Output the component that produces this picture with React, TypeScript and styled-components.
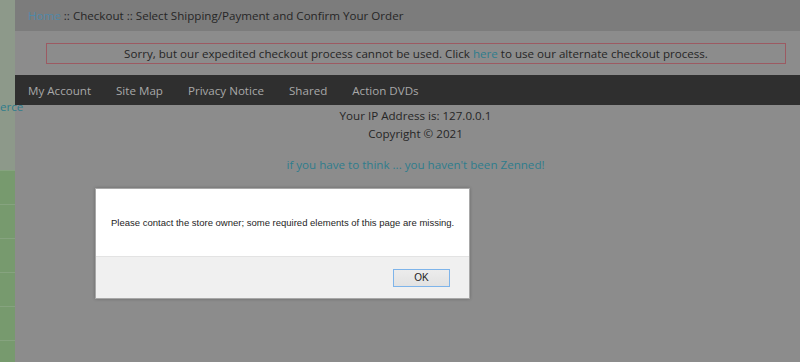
import React from "react";
import styled, { createGlobalStyle } from "styled-components";

const Global = createGlobalStyle`
  html, body { margin: 0; padding: 0; background: #8c8c8c; }
  body { font-family: "Open Sans", "Noto Sans", sans-serif; }
  #root { width: 800px; height: 362px; overflow: hidden; }
`;

const Page = styled.div`
  display: flex;
  width: 800px;
  height: 362px;
  position: relative;
`;

const SideStrip = styled.aside`
  width: 15px;
  flex: none;
  display: flex;
  flex-direction: column;
  background: #8d998a;
`;

const SideTop = styled.div`
  height: 170px;
  flex: none;
  position: relative;
`;

const SideLabel = styled.span<{ $top: number }>`
  position: absolute;
  left: 0;
  top: ${(p) => p.$top}px;
  z-index: 2;
  font-size: 11.6px;
  line-height: 14px;
  color: #2f7d8c;
  white-space: nowrap;
`;

const SideCell = styled.div`
  height: 33px;
  flex: none;
  background: #779a6e;
  border-top: 1px solid #86a37f;
`;

const Main = styled.main`
  flex: 1;
  display: flex;
  flex-direction: column;
  background: #8c8c8c;
  color: #262626;
  font-size: 11.6px;
`;

const Breadcrumb = styled.div`
  height: 31px;
  display: flex;
  align-items: center;
  padding-left: 13px;
  background: #7c7c7c;
  color: #262626;
`;

const Crumb = styled.span`
  color: #5088a8;
`;

const AlertWrap = styled.div`
  height: 44px;
  display: flex;
  align-items: center;
  padding: 0 14px 0 31px;
`;

const AlertBox = styled.div`
  flex: 1;
  height: 19px;
  display: flex;
  align-items: center;
  justify-content: center;
  border: 1px solid #9c5a62;
`;

const Link = styled.span`
  color: #2f7d8c;
  white-space: pre;
`;

const NavBar = styled.nav`
  height: 30px;
  display: flex;
  align-items: center;
  gap: 25px;
  padding-left: 13px;
  background: #2f2f2f;
`;

const NavItem = styled.span`
  color: #a8a8a8;
`;

const Footer = styled.div`
  display: flex;
  flex-direction: column;
  align-items: center;
  padding: 2px 0 0 16px;
  line-height: 18px;
`;

const Tagline = styled.div`
  margin-top: 13px;
  color: #2f7d8c;
`;

const Dialog = styled.div`
  position: absolute;
  left: 95px;
  top: 188px;
  width: 373px;
  height: 109px;
  display: flex;
  flex-direction: column;
  background: #ffffff;
  border: 1px solid #a8a8a8;
  box-shadow: 0 0 3px rgba(0, 0, 0, 0.25);
  font-family: "Liberation Sans", Arial, sans-serif;
  color: #1e1e1e;
`;

const DialogBody = styled.div`
  height: 67px;
  display: flex;
  align-items: center;
  padding-left: 15px;
  font-size: 9.5px;
  white-space: nowrap;
`;

const DialogFooter = styled.div`
  flex: 1;
  display: flex;
  align-items: center;
  justify-content: flex-end;
  padding-right: 19px;
  background: #f0f0f0;
  border-top: 1px solid #e3e3e3;
`;

const OkButton = styled.button`
  width: 57px;
  height: 18px;
  padding: 0;
  border: 1px solid #7eb4ea;
  background: linear-gradient(#ececec, #e2e2e2);
  font-family: "Liberation Sans", Arial, sans-serif;
  font-size: 10px;
  color: #222;
`;

export default function App() {
  return (
    <>
      <Global />
      <Page>
        <SideStrip>
          <SideTop>
            <SideLabel $top={100}>erce</SideLabel>
          </SideTop>
          {[0, 1, 2, 3, 4, 5].map((i) => (
            <SideCell key={i} />
          ))}
        </SideStrip>
        <Main>
          <Breadcrumb>
            <Crumb>Home</Crumb>&nbsp;:: Checkout :: Select Shipping/Payment and Confirm Your Order
          </Breadcrumb>
          <AlertWrap>
            <AlertBox>
              Sorry, but our expedited checkout process cannot be used. Click&nbsp;<Link>here</Link>&nbsp;to use our alternate checkout process.
            </AlertBox>
          </AlertWrap>
          <NavBar>
            <NavItem>My Account</NavItem>
            <NavItem>Site Map</NavItem>
            <NavItem>Privacy Notice</NavItem>
            <NavItem>Shared</NavItem>
            <NavItem>Action DVDs</NavItem>
          </NavBar>
          <Footer>
            <div>Your IP Address is: 127.0.0.1</div>
            <div>Copyright © 2021</div>
            <Tagline>if you have to think ... you haven't been Zenned!</Tagline>
          </Footer>
        </Main>
        <Dialog role="alertdialog">
          <DialogBody>Please contact the store owner; some required elements of this page are missing.</DialogBody>
          <DialogFooter>
            <OkButton>OK</OkButton>
          </DialogFooter>
        </Dialog>
      </Page>
    </>
  );
}
